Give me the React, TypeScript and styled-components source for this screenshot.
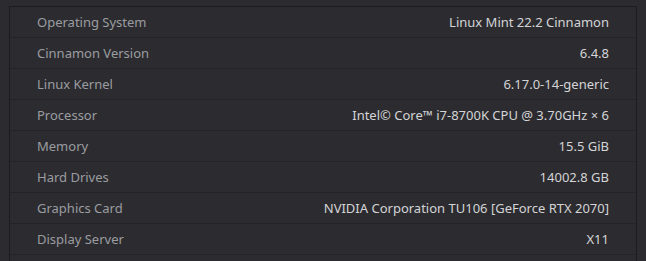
import React from "react";
import styled, { createGlobalStyle } from "styled-components";

const Global = createGlobalStyle`
  html, body {
    margin: 0;
    padding: 0;
    background: #2c2c30;
  }
  body {
    font-family: "Noto Sans", "Open Sans", sans-serif;
    -webkit-font-smoothing: antialiased;
  }
`;

const Page = styled.div`
  padding: 6px 0 0 9px;
  height: 261px;
  box-sizing: border-box;
  overflow: hidden;
`;

const Panel = styled.div`
  width: 628px;
  box-sizing: border-box;
  border: 1px solid #1d1d20;
  padding-bottom: 24px;
  display: flex;
  flex-direction: column;
`;

const Row = styled.div`
  height: 31px;
  box-sizing: border-box;
  border-bottom: 1px solid #242427;
  padding: 0 27px 0 27px;
  display: flex;
  align-items: center;
  justify-content: space-between;
  font-size: 13px;
`;

const Label = styled.span`
  color: #9b9ca0;
`;

const Value = styled.span`
  color: #d4d4d6;
`;

const rows: [string, string][] = [
  ["Operating System", "Linux Mint 22.2 Cinnamon"],
  ["Cinnamon Version", "6.4.8"],
  ["Linux Kernel", "6.17.0-14-generic"],
  ["Processor", "Intel\u00a9 Core\u2122 i7-8700K CPU @ 3.70GHz \u00d7 6"],
  ["Memory", "15.5 GiB"],
  ["Hard Drives", "14002.8 GB"],
  ["Graphics Card", "NVIDIA Corporation TU106 [GeForce RTX 2070]"],
  ["Display Server", "X11"],
];

export default function App() {
  return (
    <>
      <Global />
      <Page>
        <Panel>
          {rows.map(([k, v]) => (
            <Row key={k}>
              <Label>{k}</Label>
              <Value>{v}</Value>
            </Row>
          ))}
        </Panel>
      </Page>
    </>
  );
}
